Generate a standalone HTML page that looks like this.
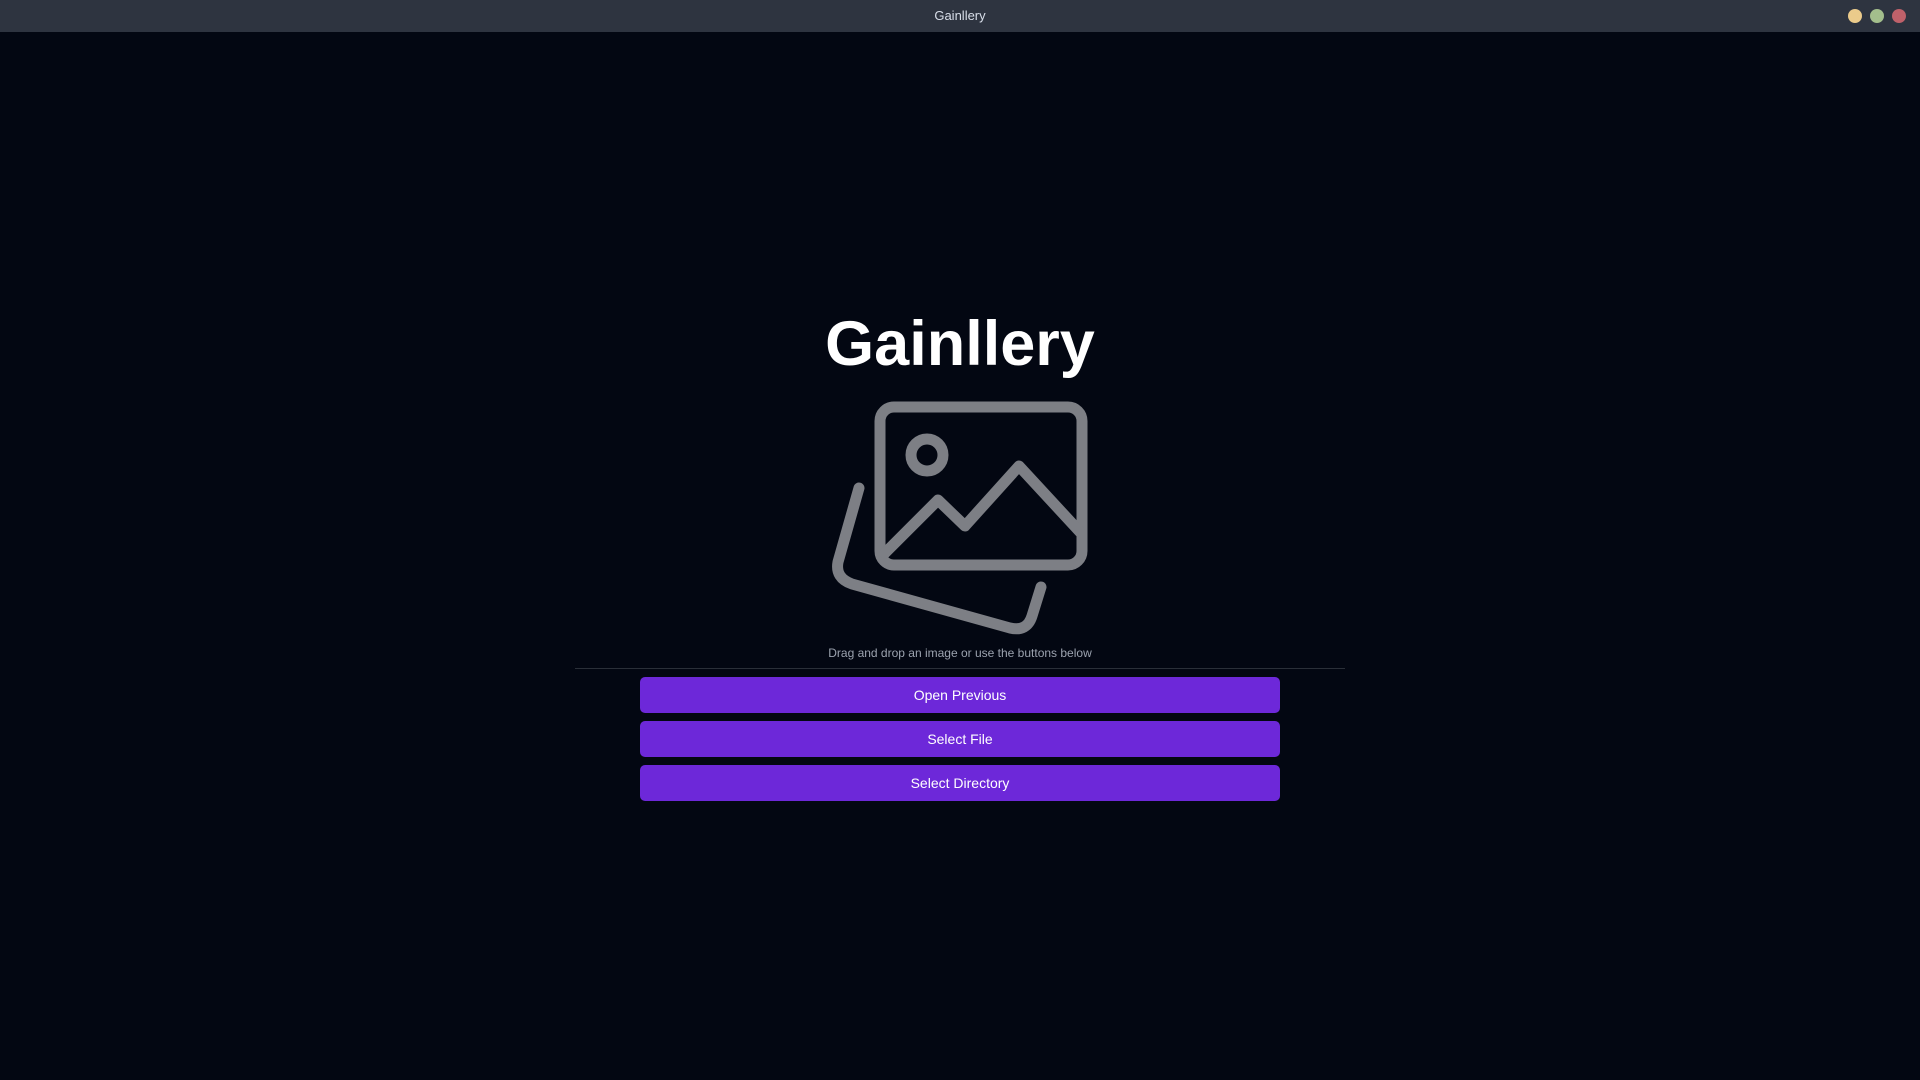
<!DOCTYPE html>
<html><head><meta charset="utf-8"><style>
*{margin:0;padding:0;box-sizing:border-box}
html,body{width:1920px;height:1080px;overflow:hidden;background:#030712;font-family:"Liberation Sans",sans-serif}
.bar{position:absolute;left:0;top:0;width:1920px;height:32px;background:#2e3440;color:#d8dee9;font-size:13px;text-align:center;line-height:31px}
.dot{position:absolute;top:9px;width:14px;height:14px;border-radius:50%}
h1{position:absolute;left:0;width:1920px;top:308px;text-align:center;color:#fff;font-size:63px;font-weight:bold;line-height:72px}
.sub{position:absolute;left:0;width:1920px;top:646px;text-align:center;color:#9ca3af;font-size:12px}
.line{position:absolute;left:575px;width:770px;top:668px;height:1px;background:#2a2f38}
.btn{position:absolute;left:640px;width:640px;height:36px;background:#6d28d9;border-radius:5px;color:#fff;font-size:14px;text-align:center;line-height:36px}
</style></head><body>
<div class="bar">Gainllery
<div class="dot" style="left:1848px;background:#ebcb8b"></div>
<div class="dot" style="left:1870px;background:#a3be8c"></div>
<div class="dot" style="left:1892px;background:#bf616a"></div>
</div>
<h1>Gainllery</h1>
<svg style="position:absolute;left:0;top:0" width="1920" height="1080">
<g fill="none" stroke="#7d7f85" stroke-width="11" stroke-linecap="round" stroke-linejoin="round">
<rect x="880" y="407" width="202" height="158" rx="14"/>
<circle cx="927" cy="455" r="16"/>
<path d="M885 553 L938 500 L965 526 L1019 466 L1080 532"/>
<path d="M859 488 L838 562 Q835 578 852 584 L1010 628 Q1027 632 1032 616 L1041 587"/>
</g></svg>
<div class="sub">Drag and drop an image or use the buttons below</div>
<div class="line"></div>
<div class="btn" style="top:677px">Open Previous</div>
<div class="btn" style="top:721px">Select File</div>
<div class="btn" style="top:765px">Select Directory</div>
</body></html>
